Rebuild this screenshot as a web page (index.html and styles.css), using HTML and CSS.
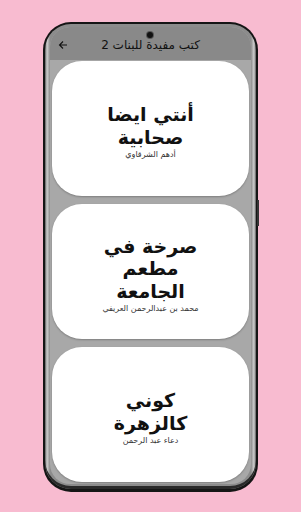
FILE: index.html
```html
<!DOCTYPE html>
<html lang="ar">
<head>
  <meta charset="UTF-8">
  <title>كتب مفيدة للبنات 2</title>
  <link rel="stylesheet" href="styles.css">
</head>
<body>

  <div class="phone">
    <div class="bezel">
      <div class="screen">
        <div class="appbar">
          <svg class="back" width="10" height="10" viewBox="0 0 10 10">
            <path d="M9 5H1.5M5 1.5L1.5 5L5 8.5" fill="none" stroke="#111" stroke-width="1.1"/>
          </svg>
          <div class="title" dir="rtl">كتب مفيدة للبنات 2</div>
        </div>
        <div class="list">
          <div class="card" dir="rtl">
            <div class="book">أنتي ايضا<br>صحابية</div>
            <div class="author">أدهم الشرقاوي</div>
          </div>
          <div class="card" dir="rtl">
            <div class="book">صرخة في<br>مطعم<br>الجامعة</div>
            <div class="author">محمد بن عبدالرحمن العريفي</div>
          </div>
          <div class="card" dir="rtl">
            <div class="book">كوني<br>كالزهرة</div>
            <div class="author">دعاء عبد الرحمن</div>
          </div>
        </div>
      </div>
    </div>
    <span class="camera"></span>
    <span class="button"></span>
  </div>

</body>
</html>
```

FILE: styles.css
```css
body { margin: 0; background: #f8bbd0; font-family: "DejaVu Sans", sans-serif; }

.phone {
  position: relative;
  width: 215px;
  height: 470px;
  margin: 22px 0 0 43px;
  padding: 2px 2px 3px;
  box-sizing: border-box;
  background: #151515;
  border-radius: 28px;
}
.bezel {
  height: 100%;
  box-sizing: border-box;
  padding: 3px 5px 5px;
  border-radius: 26px;
  background: linear-gradient(90deg, #5a5a5a, #cfcfcf 2px, #8c8c8c 5px, #8c8c8c calc(100% - 5px), #cfcfcf calc(100% - 2px), #5a5a5a);
  box-shadow: inset 0 -3px 0 #2a2a2a;
}
.screen {
  height: 100%;
  border-radius: 20px;
  overflow: hidden;
  background: #a8a8a8;
  display: flex;
  flex-direction: column;
}
.appbar {
  height: 33px;
  flex-shrink: 0;
  background: #898989;
  display: flex;
  align-items: center;
  justify-content: center;
  position: relative;
}
.back { position: absolute; left: 8px; top: 13px; }
.title { font-size: 12px; color: #111; padding-top: 2px; }

.list {
  display: flex;
  flex-direction: column;
  gap: 8px;
  padding: 1px 2px;
}
.card {
  height: 135px;
  background: #fff;
  border-radius: 30px;
  display: flex;
  flex-direction: column;
  align-items: center;
  justify-content: center;
  padding-top: 6px;
  box-sizing: border-box;
  box-shadow: 0 1px 2px rgba(0,0,0,0.25);
}
.book {
  font-weight: bold;
  font-size: 19px;
  line-height: 22.2px;
  color: #111;
  text-align: center;
}
.author { font-size: 8px; line-height: 11px; color: #333; margin-top: 1px; }

.camera {
  position: absolute;
  left: 104px;
  top: 10px;
  width: 6px;
  height: 6px;
  border-radius: 50%;
  background: #111;
  box-shadow: 0 0 0 1px #555;
}
.button {
  position: absolute;
  right: -1px;
  top: 178px;
  width: 2px;
  height: 26px;
  background: #333;
}
```
